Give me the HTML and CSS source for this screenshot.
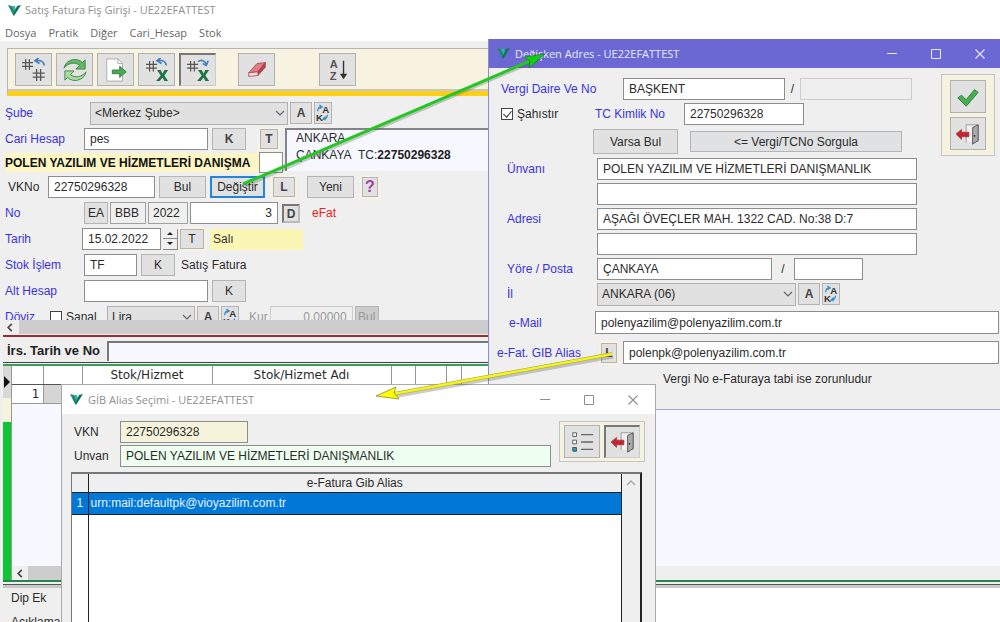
FILE: index.html
```html
<!DOCTYPE html>
<html lang="tr">
<head>
<meta charset="utf-8">
<title>Satış Fatura Fiş Girişi - UE22EFATTEST</title>
<link rel="stylesheet" href="styles.css">
</head>
<body>
<svg class="defs" aria-hidden="true">
  <symbol id="logo" viewBox="0 0 13 13"><path d="M0 1 4 2 7 8 5 11z" fill="#1c8a72"/><path d="M4 2h3l1 4-1 3z" fill="#2db694"/><path d="M13 1 9 2 5 11l1 1z" fill="#0d6f5d"/></symbol>
  <symbol id="hash" viewBox="0 0 12 12"><path d="M4 0v12M8 0v12M0 4h12M0 8h12" fill="none" stroke="#555" stroke-width="1.3"/></symbol>
  <symbol id="door" viewBox="0 0 28 26"><path d="M12 22V3h13v18h-3" fill="#f0f0f0" stroke="#999"/><path d="M19 6l6-3v17l-6 4z" fill="#aaa" stroke="#555"/><circle cx="21" cy="15" r="1" fill="#333"/><path d="M1 13l6-5v3h8v5H7v3z" fill="#c9212f" stroke="#8f3b42" stroke-width=".7"/></symbol>
  <symbol id="swap" viewBox="0 0 16 20"><text x="7" y="10" font-size="11" font-weight="bold" fill="#333">A</text><text x="0" y="19" font-size="11" font-weight="bold" fill="#333">K</text><path d="M2 8C2 5 3 3 6 3M4 1l3 2-3 2M13 12c0 4-2 5-5 5M11 14l-3 3 3 1" fill="none" stroke="#328fd0" stroke-width="1.500"/></symbol>
  <symbol id="chev" viewBox="0 0 10 10"><path d="M1 3l4 4 4-4" fill="none" stroke="#666" stroke-width="1.200"/></symbol>
  <symbol id="left" viewBox="0 0 8 10"><path d="M6 1 2 5l4 4" fill="none" stroke="#444" stroke-width="1.800"/></symbol>
  <symbol id="min" viewBox="0 0 10 10"><path d="M0 4.500h10" fill="none" stroke="currentColor"/></symbol>
  <symbol id="max" viewBox="0 0 10 10"><path d="M.5.5h9v9h-9z" fill="none" stroke="currentColor"/></symbol>
  <symbol id="close" viewBox="0 0 10 10"><path d="M.5.5l9 9M9.500.5l-9 9" fill="none" stroke="currentColor" stroke-width="1.100"/></symbol>
</svg>

<div class="desktop">
<main class="main">
  <header class="main-title"><svg class="logo"><use href="#logo"/></svg><h1>Satış Fatura Fiş Girişi - UE22EFATTEST</h1></header>
  <nav class="menu"><a href="#">Dosya</a><a href="#">Pratik</a><a href="#">Diğer</a><a href="#">Cari_Hesap</a><a href="#">Stok</a></nav>
  <div class="toolbar">
    <button class="tool" aria-label="Satırlar"><svg viewBox="0 0 28 26"><use href="#hash" x="1" y="1" width="12" height="12"/><use href="#hash" x="12" y="12" width="14" height="13"/><path d="M25 8c0-4-4-6-8-5M19 0l-4 3 5 3" fill="none" stroke="#3f80bf" stroke-width="1.800"/></svg></button>
    <button class="tool" aria-label="Yenile"><svg viewBox="0 0 28 26"><path d="M2 11C4 1 17-1 22 5l3-3v10H15l4-4C14 4 7 5 2 11z" fill="#65b865" stroke="#3f8747"/><path d="M26 15c-2 10-15 12-20 6l-3 3V14h10l-4 4c5 4 12 3 17-3z" fill="#a9dba3" stroke="#3f8747"/></svg></button>
    <button class="tool" aria-label="Aktar"><svg viewBox="0 0 28 26"><path d="M4 1h12l5 5v19H4z" fill="#fff" stroke="#aaa"/><path d="M16 1v5h5" fill="none" stroke="#aaa"/><path d="M10 13h8V9l7 6-7 6v-4h-8z" fill="#48a954" stroke="#308040"/></svg></button>
    <button class="tool" aria-label="Excel'e gönder"><svg viewBox="0 0 28 26"><use href="#hash" x="2" y="3" width="12" height="12"/><path d="M24 8c0-4-4-6-8-5M18 0l-4 3 5 3" fill="none" stroke="#3f80bf" stroke-width="1.800"/><path d="M14 13h4l2 4 2-4h4l-4 6 4 6h-4l-2-4-3 4h-4l5-6z" fill="#1e7145"/></svg></button>
    <button class="tool tool-on" aria-label="Excel'den al"><svg viewBox="0 0 28 26"><use href="#hash" x="2" y="3" width="12" height="12"/><path d="M14 4c4-3 8-1 9 3M25 3l-2 5-4-2" fill="none" stroke="#3f80bf" stroke-width="1.800"/><path d="M14 13h4l2 4 2-4h4l-4 6 4 6h-4l-2-4-3 4h-4l5-6z" fill="#1e7145"/></svg></button>
    <button class="tool tool-gap" aria-label="Sil"><svg viewBox="0 0 28 26"><path d="M5 16 14 6l9-1-8 10z" fill="#e07c86" stroke="#9b3d45" stroke-width=".8"/><path d="M15 15l8-10v5l-8 9z" fill="#b9404e" stroke="#9b3d45" stroke-width=".8"/><path d="M5 16l10-1v4L5 20z" fill="#f6dcdc" stroke="#9b3d45" stroke-width=".8"/></svg></button>
    <button class="tool tool-gap-l" aria-label="Sırala"><svg viewBox="0 0 28 26"><text x="5" y="11" font-size="12" font-weight="bold" fill="#555">A</text><text x="5" y="24" font-size="12" font-weight="bold" fill="#555">Z</text><path d="M20 3v18" stroke="#333" stroke-width="1.500"/><path d="M16 17h8l-4 6z" fill="#333"/></svg></button>
  </div>

  <form class="form">
    <div class="row tight">
      <label class="lbl w83" for="sube">Şube</label>
      <span class="sel w198"><select id="sube"><option>&lt;Merkez Şube&gt;</option></select><svg><use href="#chev"/></svg></span>
      <button type="button" class="btn b w22">A</button>
      <button type="button" class="btn w18" aria-label="A-K sırala"><svg class="swap"><use href="#swap"/></svg></button>
    </div>
    <div class="account">
      <div class="account-left">
        <div class="row">
          <label class="lbl w75" for="cari">Cari Hesap</label>
          <input class="field w124" id="cari" value="pes">
          <button type="button" class="btn b w34">K</button>
          <button type="button" class="btn b glow w18 m10">T</button>
        </div>
        <div class="band"><strong>POLEN YAZILIM VE HİZMETLERİ DANIŞMA</strong><input class="field w24" aria-label="Kod"></div>
      </div>
      <div class="info">ANKARA -<br>ÇANKAYA&nbsp; TC:<b>22750296328</b></div>
    </div>
    <div class="row in3">
      <label class="dark w36" for="vkno">VKNo</label>
      <input class="field w107" id="vkno" value="22750296328">
      <button type="button" class="btn w47">Bul</button>
      <button type="button" class="btn focus w55">Değiştir</button>
      <button type="button" class="btn b glow w22 m4">L</button>
      <button type="button" class="btn w47 m8">Yeni</button>
      <button type="button" class="btn b glow help m4">?</button>
    </div>
    <div class="row tight">
      <label class="lbl w77" for="no">No</label>
      <button type="button" class="btn w24">EA</button>
      <input class="field gray w36" aria-label="Seri" value="BBB">
      <input class="field gray w40" aria-label="Yıl" value="2022">
      <input class="field num w88" id="no" value="3">
      <button type="button" class="btn b on w18 m2">D</button>
      <span class="red m10">eFat</span>
    </div>
    <div class="row tight">
      <label class="lbl w75" for="tarih">Tarih</label>
      <input class="field w79" id="tarih" value="15.02.2022">
      <span class="spin"><button type="button" aria-label="Artır"><svg viewBox="0 0 8 5"><path d="M1 4h6L4 1z" fill="#222"/></svg></button><button type="button" aria-label="Azalt"><svg viewBox="0 0 8 5"><path d="M1 1h6L4 4z" fill="#222"/></svg></button></span>
      <button type="button" class="btn glow w24">T</button>
      <span class="day m4">Salı</span>
    </div>
    <div class="row">
      <label class="lbl w75" for="stok">Stok İşlem</label>
      <input class="field w53" id="stok" value="TF">
      <button type="button" class="btn w34">K</button>
      <span class="dark m2">Satış Fatura</span>
    </div>
    <div class="row">
      <label class="lbl w75" for="alt">Alt Hesap</label>
      <input class="field w124" id="alt">
      <button type="button" class="btn w34">K</button>
    </div>
    <div class="row tight">
      <label class="lbl w43" for="doviz">Döviz</label>
      <label class="check w55"><input type="checkbox">Sanal</label>
      <span class="sel w88"><select id="doviz"><option>Lira</option></select><svg><use href="#chev"/></svg></span>
      <button type="button" class="btn b w22">A</button>
      <button type="button" class="btn w18" aria-label="A-K sırala"><svg class="swap"><use href="#swap"/></svg></button>
      <label class="off m8" for="kur">Kur</label>
      <input class="field off num w83" id="kur" value="0,00000" disabled>
      <button type="button" class="btn off w24" disabled>Bul</button>
    </div>
  </form>

  <div class="hscroll"><svg><use href="#left"/></svg><i></i></div>
  <div class="irs"><label for="irs">İrs. Tarih ve No</label><input id="irs"></div>
  <section class="grid">
    <div class="strip"><span class="mark"><svg viewBox="0 0 8 12"><path d="M1 0v12l6-6z" fill="#111"/></svg></span></div>
    <div class="grid-body">
      <div class="grid-scroll">
        <table class="stock">
          <colgroup><col class="w31"><col class="w39"><col class="w130"><col class="w179"><col class="w24"><col class="w31"><col class="w15"><col class="w31"></colgroup>
          <tr><th></th><th></th><th>Stok/Hizmet</th><th>Stok/Hizmet Adı</th><th></th><th></th><th></th><th></th></tr>
          <tr><td>1</td><td class="shade"></td><td></td><td></td><td></td><td></td><td></td><td></td></tr>
        </table>
      </div>
      <div class="hscroll short"><svg><use href="#left"/></svg><i></i></div>
    </div>
  </section>
  <footer class="foot"><div class="foot-tabs"><span>Dip Ek</span><span>Açıklama</span></div></footer>
</main>

<section class="win address" aria-label="Değişken Adres">
  <header class="bar"><svg class="logo"><use href="#logo"/></svg><h2>Değişken Adres - UE22EFATTEST</h2><div class="ctl"><button aria-label="Küçült"><svg><use href="#min"/></svg></button><button aria-label="Büyüt"><svg><use href="#max"/></svg></button><button aria-label="Kapat"><svg><use href="#close"/></svg></button></div></header>
  <div class="addr-top">
    <div class="addr-fields">
      <div class="row"><label class="lbl w118" for="vd">Vergi Daire Ve No</label><input class="field w162" id="vd" value="BAŞKENT"><span class="slash">/</span><input class="field blank w112" aria-label="Vergi No" disabled></div>
      <div class="row"><label class="check w90"><input type="checkbox" checked>Şahıstır</label><label class="lbl w85" for="tc">TC Kimlik No</label><input class="field w120" id="tc" value="22750296328"></div>
      <div class="row acts"><button class="btn w85">Varsa Bul</button><button class="btn cool w212">&lt;= Vergi/TCNo Sorgula</button></div>
      <div class="row in6"><label class="lbl w86" for="unvan">Ünvanı</label><input class="field w320" id="unvan" value="POLEN YAZILIM VE HİZMETLERİ DANIŞMANLIK"></div>
      <div class="row in6"><span class="w86"></span><input class="field w320" aria-label="Ünvanı 2"></div>
      <div class="row in6"><label class="lbl w86" for="adres">Adresi</label><input class="field w320" id="adres" value="AŞAĞI ÖVEÇLER MAH. 1322 CAD. No:38 D:7"></div>
      <div class="row in6"><span class="w86"></span><input class="field w320" aria-label="Adresi 2"></div>
      <div class="row in6"><label class="lbl w86" for="yore">Yöre / Posta</label><input class="field w175" id="yore" value="ÇANKAYA"><span class="slash wide">/</span><input class="field w69" aria-label="Posta"></div>
      <div class="row in6 tight"><label class="lbl w88" for="il">İl</label><span class="sel w199"><select id="il"><option>ANKARA (06)</option></select><svg><use href="#chev"/></svg></span><button class="btn b w22">A</button><button class="btn w18" aria-label="A-K sırala"><svg class="swap"><use href="#swap"/></svg></button></div>
    </div>
    <div class="side">
      <button class="tool" aria-label="Tamam"><svg viewBox="0 0 28 26"><path d="M3 14l4-3 5 5L21 5l4 3-13 15z" fill="#46b053" stroke="#2d7d39"/></svg></button>
      <button class="tool" aria-label="Çıkış"><svg><use href="#door"/></svg></button>
    </div>
  </div>
  <div class="addr-low">
    <div class="row tall"><label class="lbl mail" for="mail">e-Mail</label><input class="field grow" id="mail" value="polenyazilim@polenyazilim.com.tr"></div>
    <div class="row tall"><label class="lbl w100" for="gib">e-Fat. GIB Alias</label><button class="btn b glow w16">L</button><input class="field grow m2" id="gib" value="polenpk@polenyazilim.com.tr"></div>
    <p>Vergi No e-Faturaya tabi ise zorunludur</p>
  </div>
</section>

<section class="win alias" aria-label="GİB Alias Seçimi">
  <header class="bar light"><svg class="logo"><use href="#logo"/></svg><h2>GİB Alias Seçimi - UE22EFATTEST</h2><div class="ctl"><button aria-label="Küçült"><svg><use href="#min"/></svg></button><button aria-label="Büyüt"><svg><use href="#max"/></svg></button><button aria-label="Kapat"><svg><use href="#close"/></svg></button></div></header>
  <div class="alias-top">
    <div class="alias-fields">
      <div class="row"><label class="dark w42" for="vkn2">VKN</label><input class="field cream w128" id="vkn2" value="22750296328"></div>
      <div class="row"><label class="dark w42" for="unvan2">Unvan</label><input class="field mint grow" id="unvan2" value="POLEN YAZILIM VE HİZMETLERİ DANIŞMANLIK"></div>
    </div>
    <div class="side flat">
      <button class="tool" aria-label="Liste"><svg viewBox="0 0 28 26"><path d="M4 3h4v4H4zM4 11h4v4H4z" fill="#fff" stroke="#555"/><path d="M4 19h4v4H4z" fill="#3399cc" stroke="#355"/><path d="M13 5h13M13 13h13M13 21h13" stroke="#666" stroke-width="1.500"/></svg></button>
      <button class="tool tool-on" aria-label="Çıkış"><svg><use href="#door"/></svg></button>
    </div>
  </div>
  <div class="list">
    <table>
      <tr><th class="n"></th><th>e-Fatura Gib Alias</th></tr>
      <tr class="picked"><td class="n">1</td><td>urn:mail:defaultpk@vioyazilim.com.tr</td></tr>
      <tr class="rest"><td class="n"></td><td></td></tr>
    </table>
    <div class="vscroll"><svg viewBox="0 0 10 10"><path d="M1 7l4-4 4 4" fill="none" stroke="#aaa" stroke-width="1.500"/></svg></div>
  </div>
</section>

<svg class="arrows" viewBox="0 0 1000 622" aria-hidden="true">
  <path d="M245 186 530 63" stroke="#555" stroke-opacity=".3" stroke-width="3"/>
  <path d="M243 184 530 61" stroke="#22c822" stroke-width="3"/>
  <path d="M545 54 524 57 530 61 529 68z" fill="#10d010" stroke="#147d14" stroke-width=".7"/>
  <path d="M613 357 393 397" stroke="#555" stroke-opacity=".3" stroke-width="3"/>
  <path d="M612 354 393 394" stroke="#a3a32c" stroke-width="3.500"/>
  <path d="M612 354 393 394" stroke="#f2f224" stroke-width="2.500"/>
  <path d="M376 396 396 387 394 393 399 399z" fill="#ffff00" stroke="#8c8c25" stroke-width=".8"/>
</svg>
</div>
</body>
</html>
```
FILE: styles.css
```css
* { box-sizing: border-box; }
body { margin: 0; font: 12px/16px "Liberation Sans", Arial, sans-serif; color: #2b2b2b; }
button, input, select { font: inherit; color: inherit; margin: 0; border-radius: 0; }
button { padding: 0; }
h1, h2, p { margin: 0; font-weight: normal; }
.defs { position: absolute; width: 0; height: 0; }
.desktop { position: relative; height: 100vh; overflow: hidden; background: #efefef; }

/* main window */
.main { display: flex; flex-direction: column; height: 100%; }
.main-title { display: flex; align-items: center; gap: 4px; height: 20px; padding-left: 8px; background: #fff; flex: none; }
.logo { width: 13px; height: 13px; flex: none; }
h1, h2 { font: 11px/16px "Open Sans", "Noto Sans", sans-serif; color: #8f8f8f; }
.menu { display: flex; gap: 12px; height: 21px; padding: 4px 5px; background: #fff; flex: none; }
.menu a { font: 11px/18px "Open Sans", "Noto Sans", sans-serif; color: #666; text-decoration: none; }
.toolbar { display: flex; flex: none; gap: 4px; height: 48px; margin: 7px 0 0 7px; padding: 4px 7px 0; background: #f7f3e0; border-top: 1px solid #b5b5b5; border-left: 1px solid #b5b5b5; border-bottom: 5px solid #fccf14; box-shadow: inset 0 -2px #c6c6c6; }
.tool { display: grid; place-items: center; width: 36px; height: 33px; background: #e1e1e1; border: 1px solid #b2b2b2; }
.toolbar .tool { width: 37px; }
.tool svg { width: 26px; height: 24px; }
.tool-on { border-color: #777 #ccc #ccc #777; border-width: 2px 1px 1px 2px; }
.toolbar .tool-gap { margin-left: 18px; }
.toolbar .tool-gap-l { margin-left: 40px; }

.form { display: flex; flex-direction: column; gap: 4px; flex: none; max-height: 224px; padding: 6px 0 0 5px; overflow: hidden; }
.row { display: flex; align-items: center; gap: 4px; height: 22px; flex: none; }
.row > * { flex: none; }
.row > .grow { flex: 1; min-width: 0; }
.tight { gap: 2px; }
.in3 { padding-left: 3px; }
.in6 { padding-left: 6px; }
.lbl { color: #3a33dc; white-space: nowrap; }
.field { height: 22px; padding: 0 5px; border: 1px solid #8d8d8d; background: #fff; outline: 0; }
.field.gray { background: #efefef; padding: 0 4px; border-color: #a0a0a0; }
.field.cream { background: #f5f3dc; }
.field.mint { background: #efffef; }
.field.off, .field.blank { background: #efefef; border-color: #ccc; }
.num { text-align: right; }
.off { color: #999; }
.btn { display: grid; place-items: center; height: 22px; background: #e1e1e1; border: 1px solid #b4b4b4; white-space: nowrap; }
.btn.off { background: #ccc; color: #999; }
.b { font-weight: bold; color: #444; }
.focus { border: 2px solid #2384d8; }
.glow { height: 20px; box-shadow: 0 0 0 2px #f7f3e0; }
.on { height: 19px; border: 2px solid #888; border-color: #777 #bbb #bbb #777; }
.help { width: 16px; font-size: 16px; color: #a4429b; }
.cool { background: #dfe1e3; height: 21px; }
.swap { width: 14px; height: 18px; }
.sel { display: grid; align-items: center; height: 23px; }
.sel > * { grid-area: 1 / 1; }
.sel select { appearance: none; width: 100%; height: 23px; padding: 0 4px; border: 1px solid #b0b0b0; background: #e1e1e1; }
.sel svg { width: 10px; height: 10px; justify-self: end; margin-right: 3px; pointer-events: none; }
.check { display: flex; align-items: center; gap: 4px; }
.check input { appearance: none; width: 12px; height: 12px; border: 1px solid #444; background: #fff; display: grid; place-items: center; }
.check input:checked::after { content: ""; width: 4px; height: 7px; margin-bottom: 2px; border: solid #333; border-width: 0 1px 1px 0; transform: rotate(40deg); }
.account { display: flex; }
.account-left { display: grid; gap: 3px; width: 280px; flex: none; align-content: start; }
.band { display: flex; align-items: center; justify-content: space-between; height: 19px; width: 278px; background: #fbf6c4; white-space: nowrap; color: #111; }
.band .field { height: 21px; }
.info { flex: 1; height: 43px; padding: 0 9px; line-height: 17px; border-top: 2px solid #83838a; border-left: 2px solid #83838a; background: #f7f8ff; }
.info b { color: #222; }
.red { color: #f02020; }
.day { width: 93px; padding: 2px 3px; line-height: 17px; background: #fbf6b4; color: #333; }
.spin { display: grid; width: 15px; height: 21px; }
.spin button { display: grid; place-items: center; border: 0; border-right: 1px solid #888; border-bottom: 1px solid #888; background: #efefef; }
.spin svg { width: 8px; height: 5px; }

.hscroll { display: flex; align-items: center; height: 14px; padding-left: 6px; gap: 5px; flex: none; background: #efefef; }
.hscroll svg { width: 8px; height: 9px; }
.hscroll i { flex: 1; height: 14px; background: #cdcdcd; }
.hscroll.short { padding-left: 4px; gap: 4px; }
.hscroll.short i { flex: 0 1 55%; }
.irs { display: flex; align-items: center; gap: 7px; height: 28px; margin: 1px 0 0 3px; padding: 2px 0 0 4px; flex: none; border-top: 2px solid #9c2a33; border-bottom: 1px solid #444; }
.irs label { font-size: 13px; font-weight: bold; color: #222; white-space: nowrap; }
.irs input { flex: 1; min-width: 0; height: 20px; border: 1px solid #777; border-width: 2px 0 0 2px; background: #f7f8ff; }
.grid { display: flex; flex: 1; min-height: 0; margin: 1px 0 0 3px; border-top: 2px solid #3c9c5c; border-bottom: 2px solid #27854b; }
.strip { width: 8px; flex: none; background: linear-gradient(#f5f3dc 56px, #0cc634 56px); }
.mark { display: grid; place-items: center; height: 32px; background: #d8d8d8; }
.mark svg { width: 8px; height: 12px; }
.grid-body { display: flex; flex-direction: column; flex: 1; min-width: 0; border-left: 1px solid #999; }
.grid-scroll { flex: 1; overflow: hidden; background: #f7f8ff; }
.stock { border-collapse: collapse; table-layout: fixed; width: 480px; }
.stock th, .stock td { height: 18px; padding: 0; border: 1px solid #999; border-top: 0; border-left: 0; background: #fff; font: 12px/16px "DejaVu Sans", sans-serif; }
.stock th { border-bottom-color: #555; }
.stock td { height: 19px; text-align: right; padding-right: 3px; }
.stock .shade { background: #d5d5d5; }
.foot { flex: none; height: 38px; overflow: hidden; margin: 2px 0 0 3px; border-top: 1px solid #555; background: #fff; box-shadow: inset 0 3px #c9c9c9; }
.foot-tabs { display: grid; gap: 8px; width: 70px; margin-top: 3px; padding: 2px 8px; background: #efefef; height: 100%; align-content: start; }

/* child windows */
.win { position: absolute; display: flex; flex-direction: column; background: #efefef; }
.address { left: 488px; top: 39px; right: 0; border-left: 1px solid #8d8bd0; border-bottom: 1px solid #a9a8d8; }
.bar { display: flex; align-items: center; gap: 5px; height: 29px; padding: 0 15px 0 8px; flex: none; background: #6b68d3; color: #e8e8ff; }
.bar h2 { flex: 1; color: inherit; }
.bar.light { background: #fff; color: #8f8f8f; }
.ctl { display: flex; gap: 34px; }
.ctl button { display: grid; place-items: center; width: 10px; height: 20px; border: 0; background: none; }
.ctl svg { width: 10px; height: 10px; }
.addr-top { display: flex; justify-content: space-between; padding: 6px 5px 0 12px; }
.addr-fields { display: grid; gap: 3px; padding-top: 4px; }
.slash { width: 7px; text-align: center; }
.slash.wide { width: 14px; }
.acts { height: 27px; padding-left: 92px; gap: 12px; }
.acts .btn:first-child { height: 25px; }
.side { display: flex; flex-direction: column; gap: 4px; align-self: flex-start; padding: 5px 8px; background: #f5f3e0; border: 1px solid #c4c4c4; }
.addr-low { display: grid; gap: 7px; padding: 6px 1px 0 8px; }
.tall { height: 23px; }
.tall .field { height: 23px; }
.mail { width: 94px; padding-left: 12px; }
.addr-low p { padding: 0 0 22px 166px; }

.alias { left: 61px; top: 384px; width: 595px; bottom: 0; border: 1px solid #aaa; border-bottom: 0; }
.alias .bar { padding-right: 17px; }
.alias-top { display: flex; gap: 8px; padding: 7px 10px 0 12px; }
.alias-fields { display: grid; gap: 2px; flex: 1; align-content: start; }
.side.flat { flex-direction: row; padding: 3px 4px; }
.list { display: flex; flex: 1; margin: 5px 13px 0 9px; border: solid #777; border-width: 2px 2px 0 1px; border-right-color: #222; }
.list table { flex: 1; border-collapse: collapse; height: 100%; background: #fff; }
.list th { height: 18px; padding: 0; font-weight: normal; background: #efefef; }
.list th, .list td { border-bottom: 1px solid #222; border-right: 1px solid #222; }
.list td { padding: 0 2px; height: 22px; }
.list .n { width: 16px; text-align: center; }
.picked td { background: #0078d7; color: #e4f1ff; }
.list .rest td { height: auto; border-bottom: 0; }
.vscroll { width: 18px; padding: 4px; }
.vscroll svg { width: 10px; height: 10px; display: block; }
.arrows { position: absolute; left: 0; top: 0; width: 1000px; height: 622px; pointer-events: none; fill: none; }

/* widths and spacers */
.w15 { width: 15px; } .w16 { width: 16px; } .w18 { width: 18px; } .w22 { width: 22px; } .w24 { width: 24px; }
.w31 { width: 31px; } .w34 { width: 34px; } .w36 { width: 36px; } .w39 { width: 39px; } .w40 { width: 40px; }
.w42 { width: 42px; } .w43 { width: 43px; } .w47 { width: 47px; } .w53 { width: 53px; } .w55 { width: 55px; }
.w69 { width: 69px; } .w75 { width: 75px; } .w77 { width: 77px; } .w79 { width: 79px; } .w83 { width: 83px; }
.w85 { width: 85px; } .w86 { width: 86px; } .w88 { width: 88px; } .w90 { width: 90px; } .w100 { width: 100px; }
.w107 { width: 107px; } .w112 { width: 112px; } .w118 { width: 118px; } .w120 { width: 120px; } .w124 { width: 124px; }
.w128 { width: 128px; } .w130 { width: 130px; } .w162 { width: 162px; } .w175 { width: 175px; } .w179 { width: 179px; }
.w198 { width: 198px; } .w199 { width: 199px; } .w212 { width: 212px; } .w320 { width: 320px; }
.m2 { margin-left: 2px; } .m4 { margin-left: 4px; } .m8 { margin-left: 8px; } .m10 { margin-left: 10px; }
```
